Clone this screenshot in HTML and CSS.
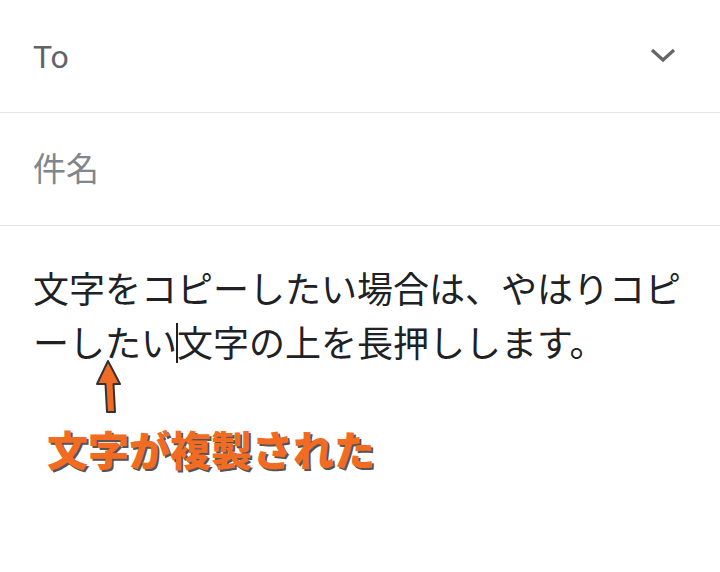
FILE: index.html
```html
<!DOCTYPE html>
<html lang="ja">
<head>
  <meta charset="UTF-8">
  <meta name="viewport" content="width=device-width, initial-scale=1.0">
  <title>メール作成</title>
  <link rel="stylesheet" href="styles.css">
</head>
<body>
  <div class="compose">
    <div class="field to">
      <span class="label">To</span>
      <svg class="chevron" width="28" height="20" viewBox="0 0 28 20">
        <path d="M3 5 L14 15 L25 5" fill="none" stroke="#666" stroke-width="3.2"/>
      </svg>
    </div>
    <div class="field subject">
      <span class="placeholder">件名</span>
    </div>
    <div class="body">
      <p class="text">文字をコピーしたい場合は、やはりコピーしたい<span class="caret"></span>文字の上を長押しします。</p>

      <svg class="arrow" width="30" height="56" viewBox="0 0 30 56">
        <path d="M13 1 L25 24 L18.5 24 L20 52 L12 52 L10.5 24 L2 24 Z" fill="#f26b22" stroke="#333" stroke-width="2" stroke-linejoin="round"/>
      </svg>
      <div class="note">文字が複製された</div>
    </div>
  </div>
</body>
</html>
```

FILE: styles.css
```css
body {
  margin: 0;
  background: #fff;
  font-family: Roboto, "Noto Sans CJK JP", sans-serif;
}
.compose {
  width: 720px;
  height: 572px;
  overflow: hidden;
}
.field {
  height: 112px;
  border-bottom: 1px solid #e6e6e6;
  display: flex;
  align-items: center;
  padding: 0 33px;
}
.to {
  justify-content: space-between;
}
.label {
  font-size: 32px;
  color: #606368;
  margin-top: 2px;
}
.chevron {
  margin-right: 10px;
  margin-top: -2px;
}
.placeholder {
  font-family: "Noto Sans CJK JP", sans-serif;
  font-size: 33px;
  color: #80868b;
  margin-top: -4px;
}
.body {
  position: relative;
  padding: 34px 33px 0;
}
.text {
  margin: 0;
  font-family: "Noto Sans CJK JP", sans-serif;
  font-size: 36px;
  line-height: 54px;
  color: #202124;
}
.caret {
  display: inline-block;
  width: 2px;
  height: 40px;
  background: #202124;
  vertical-align: -6px;
  margin: 0 -1px;
}
.arrow {
  position: absolute;
  left: 95px;
  top: 134px;
}
.note {
  margin: 50px 0 0 14px;
  font-family: "Noto Sans CJK JP", sans-serif;
  font-size: 41px;
  font-weight: 900;
  color: #f26b22;
  text-shadow: 2px 2px 0 #555;
}
```
